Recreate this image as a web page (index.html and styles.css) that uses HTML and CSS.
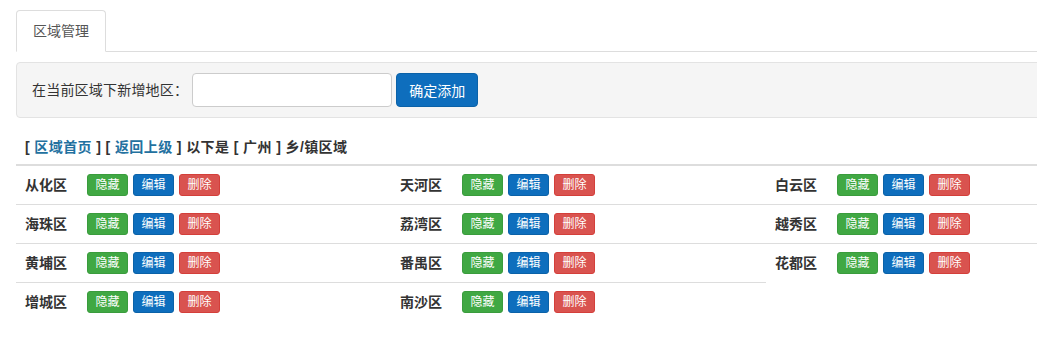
FILE: index.html
```html
<!DOCTYPE html>
<html lang="zh-CN">

<head>
    <meta charset="UTF-8">
    <meta name="viewport" content="width=device-width, initial-scale=1.0">
    <title>区域管理</title>
    <link rel="stylesheet" href="styles.css">
</head>

<body>
    <div class="page">
        <!-- Tabs -->
        <ul class="nav-tabs">
            <li class="tab active">区域管理</li>
        </ul>

        <!-- Add form -->
        <div class="well">
            <label for="areaName">在当前区域下新增地区：</label>
            <input id="areaName" type="text" class="form-input">
            <button class="btn btn-primary">确定添加</button>
        </div>

        <!-- Breadcrumb -->
        <div class="crumbs">
            [ <a href="#">区域首页</a> ] [ <a href="#">返回上级</a> ] 以下是 [ 广州 ] 乡/镇区域
        </div>

        <table class="area-table">
            <colgroup>
                <col class="c-name"><col class="c-ops">
                <col class="c-name"><col class="c-ops">
                <col class="c-name"><col class="c-ops">
            </colgroup>
            <tbody>
                <tr>
                    <td class="name">从化区</td>
                    <td><div class="ops"><button class="btn-xs green">隐藏</button><button class="btn-xs blue">编辑</button><button class="btn-xs red">删除</button></div></td>
                    <td class="name">天河区</td>
                    <td><div class="ops"><button class="btn-xs green">隐藏</button><button class="btn-xs blue">编辑</button><button class="btn-xs red">删除</button></div></td>
                    <td class="name">白云区</td>
                    <td><div class="ops"><button class="btn-xs green">隐藏</button><button class="btn-xs blue">编辑</button><button class="btn-xs red">删除</button></div></td>
                </tr>
                <tr>
                    <td class="name">海珠区</td>
                    <td><div class="ops"><button class="btn-xs green">隐藏</button><button class="btn-xs blue">编辑</button><button class="btn-xs red">删除</button></div></td>
                    <td class="name">荔湾区</td>
                    <td><div class="ops"><button class="btn-xs green">隐藏</button><button class="btn-xs blue">编辑</button><button class="btn-xs red">删除</button></div></td>
                    <td class="name">越秀区</td>
                    <td><div class="ops"><button class="btn-xs green">隐藏</button><button class="btn-xs blue">编辑</button><button class="btn-xs red">删除</button></div></td>
                </tr>
                <tr>
                    <td class="name">黄埔区</td>
                    <td><div class="ops"><button class="btn-xs green">隐藏</button><button class="btn-xs blue">编辑</button><button class="btn-xs red">删除</button></div></td>
                    <td class="name">番禺区</td>
                    <td><div class="ops"><button class="btn-xs green">隐藏</button><button class="btn-xs blue">编辑</button><button class="btn-xs red">删除</button></div></td>
                    <td class="name">花都区</td>
                    <td><div class="ops"><button class="btn-xs green">隐藏</button><button class="btn-xs blue">编辑</button><button class="btn-xs red">删除</button></div></td>
                </tr>
                <tr>
                    <td class="name">增城区</td>
                    <td><div class="ops"><button class="btn-xs green">隐藏</button><button class="btn-xs blue">编辑</button><button class="btn-xs red">删除</button></div></td>
                    <td class="name">南沙区</td>
                    <td><div class="ops"><button class="btn-xs green">隐藏</button><button class="btn-xs blue">编辑</button><button class="btn-xs red">删除</button></div></td>
                </tr>
            </tbody>
        </table>
    </div>
</body>

</html>
```

FILE: styles.css
```css
body {
    margin: 0;
    font-family: "Liberation Sans", Arial, "Noto Sans CJK SC", sans-serif;
    font-size: 14px;
    line-height: 20px;
    color: #333;
    background: #fff;
    overflow: hidden;
}

.page {
    width: 1125px;
    padding: 10px 0 0 16px;
}

/* Tabs */
.nav-tabs {
    display: flex;
    margin: 0;
    padding: 0;
    list-style: none;
    border-bottom: 1px solid #ddd;
}

.tab {
    margin-bottom: -1px;
    padding: 10px 16px;
    color: #555;
    border: 1px solid transparent;
    border-radius: 4px 4px 0 0;
}

.tab.active {
    background: #fff;
    border-color: #ddd;
    border-bottom-color: #fff;
}

/* Add form */
.well {
    display: flex;
    align-items: center;
    margin-top: 10px;
    padding: 10px 15px;
    background: #f5f5f5;
    border: 1px solid #e3e3e3;
    border-radius: 4px;
}

.well label {
    margin-right: 4px;
    letter-spacing: 0.2px;
}

.form-input {
    width: 200px;
    height: 34px;
    box-sizing: border-box;
    padding: 6px 12px;
    border: 1px solid #ccc;
    border-radius: 4px;
    background: #fff;
    outline: none;
}

.btn {
    height: 34px;
    margin-left: 4px;
    padding: 0 12px;
    border: 1px solid #0b62a8;
    border-radius: 4px;
    font-family: inherit;
    font-size: 14px;
    color: #fff;
    cursor: pointer;
}

.btn-primary {
    background: #0e6ebd;
}

/* Breadcrumb */
.crumbs {
    margin-top: 19px;
    padding: 0 9px;
    font-weight: bold;
    letter-spacing: 0.4px;
}

.crumbs a {
    color: #23719f;
    text-decoration: none;
}

/* Area table */
.area-table {
    width: 1125px;
    margin-top: 7px;
    border-collapse: collapse;
    table-layout: fixed;
}

.c-name {
    width: 63px;
}

.c-ops {
    width: 312px;
}

.area-table td {
    padding: 8px;
    border-top: 1px solid #ddd;
    vertical-align: middle;
}

.area-table tr:first-child td {
    border-top: 2px solid #ddd;
}

.area-table td.name {
    padding-left: 9px;
    padding-right: 0;
    font-weight: bold;
}

.ops {
    display: flex;
    gap: 5px;
}

.btn-xs {
    width: 41px;
    height: 22px;
    padding: 0;
    border: 1px solid transparent;
    border-radius: 3px;
    font-family: inherit;
    font-size: 12px;
    line-height: 20px;
    color: #fff;
    cursor: pointer;
}

.green {
    background: #40a843;
    border-color: #3a9c3d;
}

.blue {
    background: #0e6ebd;
    border-color: #0b62a8;
}

.red {
    background: #d9534f;
    border-color: #d43f3a;
}
```
